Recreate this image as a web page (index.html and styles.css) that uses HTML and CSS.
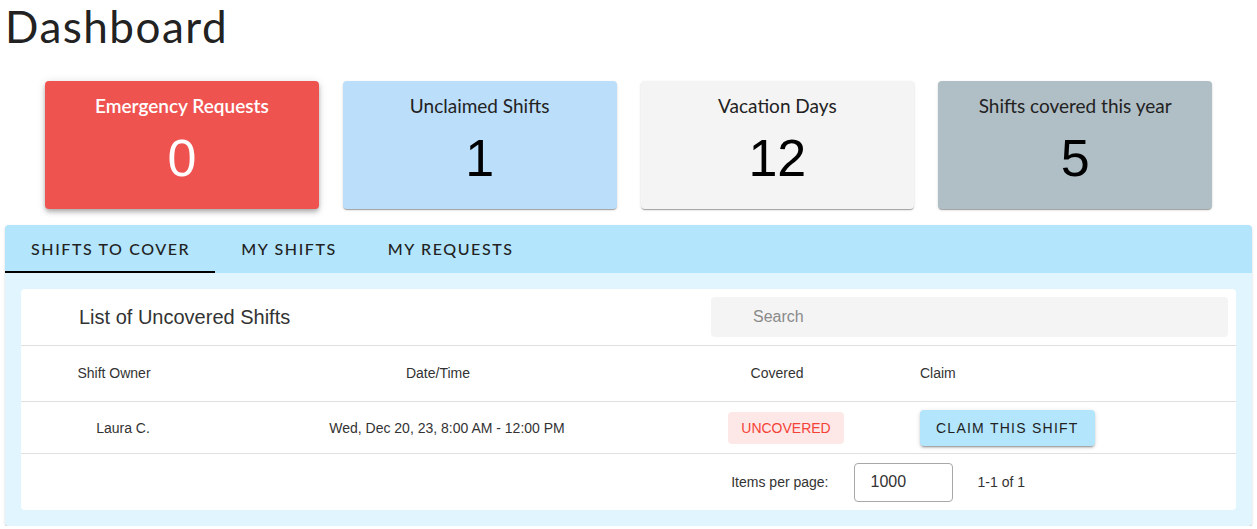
FILE: index.html
```html
<!DOCTYPE html>
<html>
<head>
<meta charset="utf-8">
<title>Dashboard</title>
<link rel="stylesheet" href="styles.css">
</head>
<body>
<div class="page">
  <h1 class="title">Dashboard</h1>

  <div class="stats">
    <div class="stat stat-red">
      <div class="stat-label">Emergency Requests</div>
      <div class="stat-value">0</div>
    </div>
    <div class="stat stat-blue">
      <div class="stat-label">Unclaimed Shifts</div>
      <div class="stat-value">1</div>
    </div>
    <div class="stat stat-grey">
      <div class="stat-label">Vacation Days</div>
      <div class="stat-value">12</div>
    </div>
    <div class="stat stat-slate">
      <div class="stat-label">Shifts covered this year</div>
      <div class="stat-value">5</div>
    </div>
  </div>

  <div class="panel">
    <div class="tabs">
      <div class="tab active">Shifts to cover</div>
      <div class="tab">My shifts</div>
      <div class="tab">My requests</div>
    </div>
    <div class="panel-body">
      <div class="card">
        <div class="card-head">
          <div class="card-title">List of Uncovered Shifts</div>
          <div class="search">Search</div>
        </div>
        <div class="row row-head">
          <div class="cell center"><span>Shift Owner</span><span class="sort-gap"></span></div>
          <div class="cell center"><span>Date/Time</span><span class="sort-gap"></span></div>
          <div class="cell center"><span>Covered</span><span class="sort-gap"></span></div>
          <div class="cell claim">Claim</div>
        </div>
        <div class="row row-data">
          <div class="cell center">Laura C.</div>
          <div class="cell center">Wed, Dec 20, 23, 8:00 AM - 12:00 PM</div>
          <div class="cell center"><span class="chip">UNCOVERED</span></div>
          <div class="cell claim"><button class="btn-claim">Claim this shift</button></div>
        </div>
        <div class="paginator">
          <span class="pg-label">Items per page:</span>
          <div class="pg-select">1000</div>
          <span class="pg-range">1-1 of 1</span>
        </div>
      </div>
    </div>
  </div>
</div>
</body>
</html>
```

FILE: styles.css
```css
* { box-sizing: border-box; }

html, body {
  margin: 0;
  padding: 0;
  background: #ffffff;
}

body {
  font-family: "Liberation Sans", Arial, sans-serif;
  color: #222;
}

.page {
  padding: 0 5px;
}

.title {
  margin: 0;
  font-family: "Lato", "Noto Sans", sans-serif;
  font-weight: 400;
  font-size: 44px;
  line-height: 53px;
  letter-spacing: 1.5px;
  color: #222;
}

/* ---------- stat cards ---------- */
.stats {
  display: grid;
  grid-template-columns: repeat(4, 1fr);
  gap: 24px;
  margin: 28px 40px 0 40px;
}

.stat {
  height: 128px;
  border-radius: 4px;
  padding-top: 13px;
  display: flex;
  flex-direction: column;
  align-items: center;
  box-shadow: 0 2px 1px -1px rgba(0,0,0,.2), 0 1px 1px 0 rgba(0,0,0,.14), 0 1px 3px 0 rgba(0,0,0,.12);
}

.stat-label {
  font-family: "Lato", "Noto Sans", sans-serif;
  font-size: 19px;
  line-height: 24px;
  color: #222;
}

.stat-value {
  margin-top: 14px;
  font-family: "Liberation Sans", Arial, sans-serif;
  font-size: 52px;
  line-height: 52px;
  color: #000;
}

.stat-red {
  background: #ef5350;
  box-shadow: 0 2px 4px -1px rgba(0,0,0,.2), 0 4px 5px 0 rgba(0,0,0,.14), 0 1px 10px 0 rgba(0,0,0,.12);
}
.stat-red .stat-label { color: #fff; font-weight: 600; }
.stat-red .stat-value { color: #fff; }
.stat-blue { background: #bbdefb; }
.stat-grey { background: #f4f4f4; }
.stat-slate { background: #b0bec5; }

/* ---------- tab panel ---------- */
.panel {
  margin-top: 16px;
  border-radius: 4px;
  overflow: hidden;
  box-shadow: 0 2px 1px -1px rgba(0,0,0,.2), 0 1px 1px 0 rgba(0,0,0,.14), 0 1px 3px 0 rgba(0,0,0,.12);
}

.tabs {
  display: flex;
  height: 48px;
  background: #b3e5fc;
}

.tab {
  padding: 0 25px 0 26px;
  display: flex;
  align-items: center;
  font-family: "Lato", "Noto Sans", sans-serif;
  font-size: 16px;
  font-weight: 500;
  letter-spacing: 1.6px;
  text-transform: uppercase;
  color: #222;
  border-bottom: 2px solid transparent;
}

.tab.active {
  border-bottom-color: #000;
}

.panel-body {
  background: #e1f5fe;
  padding: 16px;
}

.card {
  background: #fff;
  border-radius: 4px;
}

.card-head {
  display: flex;
  align-items: center;
  height: 57px;
  border-bottom: 1px solid #e0e0e0;
}

.card-title {
  flex: 1;
  padding-left: 58px;
  font-size: 20px;
  color: #333;
}

.search {
  width: 517px;
  height: 40px;
  margin-right: 8px;
  background: #f4f4f4;
  border-radius: 4px;
  padding-left: 42px;
  display: flex;
  align-items: center;
  font-size: 16px;
  color: #8a8a8a;
}

/* ---------- table ---------- */
.row {
  display: grid;
  grid-template-columns: 204px 444px 234px 1fr;
  align-items: center;
  border-bottom: 1px solid #e0e0e0;
  font-size: 14px;
  color: #333;
}

.row-head { height: 56px; }
.row-data { height: 52px; }

.cell.center {
  display: flex;
  justify-content: center;
  align-items: center;
}

.row-head .cell { padding-bottom: 2px; }

.sort-gap {
  display: inline-block;
  width: 18px;
}

.cell.claim {
  padding-left: 17px;
}

.chip {
  display: inline-block;
  background: #fde7e7;
  color: #f44336;
  border-radius: 4px;
  padding: 0 13px;
  height: 32px;
  line-height: 32px;
  font-size: 14px;
}

.btn-claim {
  border: none;
  background: #b3e5fc;
  color: #222;
  height: 36px;
  padding: 0 16px;
  border-radius: 4px;
  font-family: "Liberation Sans", Arial, sans-serif;
  font-size: 14px;
  letter-spacing: 1.25px;
  text-transform: uppercase;
  box-shadow: 0 3px 1px -2px rgba(0,0,0,.2), 0 2px 2px 0 rgba(0,0,0,.14), 0 1px 5px 0 rgba(0,0,0,.12);
}

/* ---------- paginator ---------- */
.paginator {
  height: 56px;
  display: flex;
  align-items: center;
  justify-content: flex-end;
  padding-right: 211px;
  font-size: 14px;
  color: #333;
}

.pg-select {
  width: 99px;
  height: 39px;
  margin: 0 25px;
  border: 1px solid #a8a8a8;
  border-radius: 4px;
  padding-left: 16px;
  display: flex;
  align-items: center;
  font-size: 16px;
  color: #333;
}
```
